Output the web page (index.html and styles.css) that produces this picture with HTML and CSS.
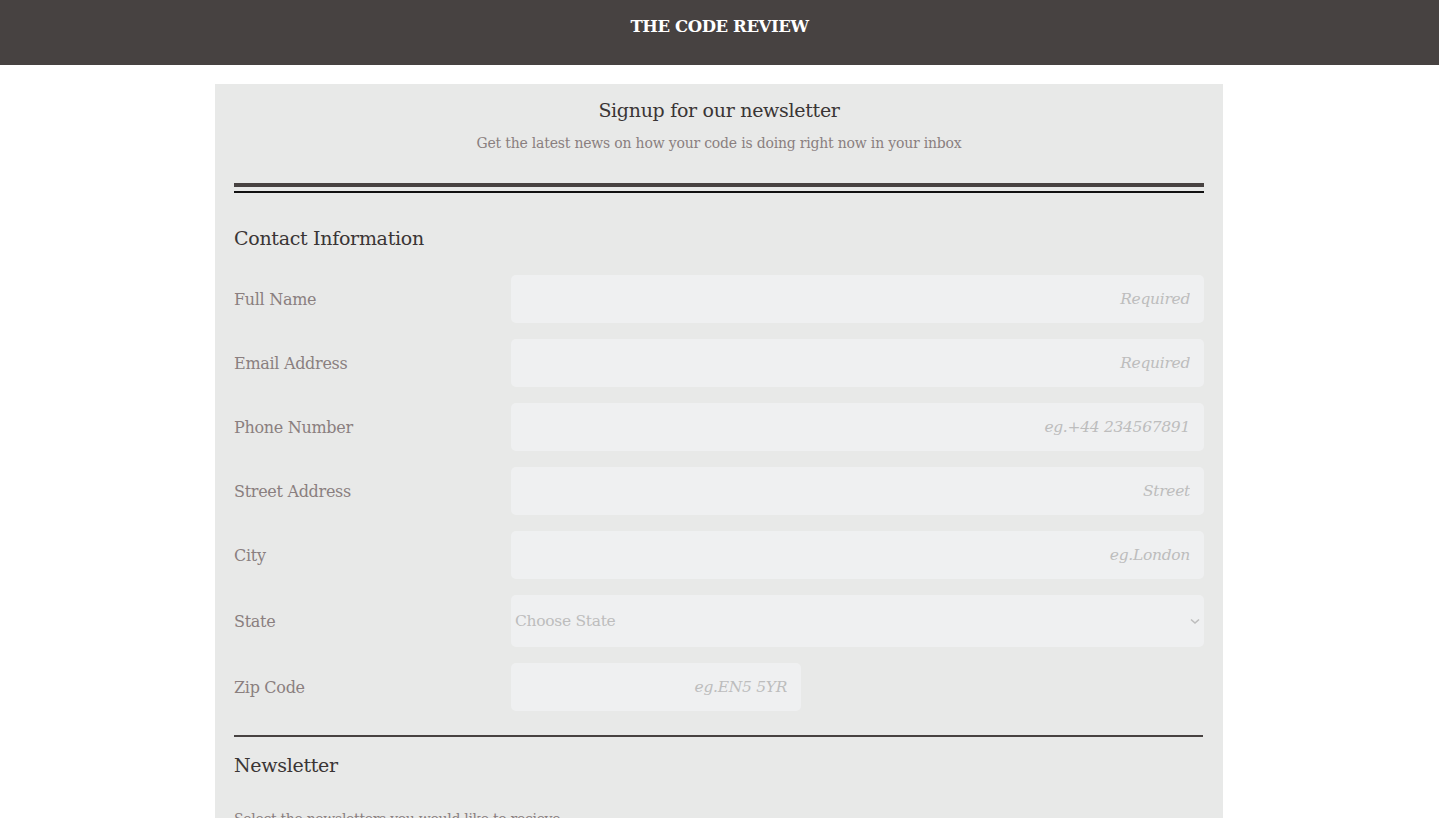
FILE: index.html
```html
<!DOCTYPE html>
<html lang="en">
<head>
<meta charset="utf-8">
<title>The Code Review</title>
<link rel="stylesheet" href="styles.css">
</head>
<body>
<header class="topbar">
  <h1 class="brand">THE CODE REVIEW</h1>
</header>
<main class="card">
  <div class="intro">
    <h2 class="intro-title">Signup for our newsletter</h2>
    <p class="intro-sub">Get the latest news on how your code is doing right now in your inbox</p>
  </div>
  <div class="double-rule"><span class="rule-thick"></span><span class="rule-thin"></span></div>
  <section class="section">
    <h3 class="section-title">Contact Information</h3>
    <div class="rows">
      <div class="row"><label class="label">Full Name</label><input class="field" placeholder="Required"></div>
      <div class="row"><label class="label">Email Address</label><input class="field" placeholder="Required"></div>
      <div class="row"><label class="label">Phone Number</label><input class="field" placeholder="eg.+44 234567891"></div>
      <div class="row"><label class="label">Street Address</label><input class="field" placeholder="Street"></div>
      <div class="row"><label class="label">City</label><input class="field" placeholder="eg.London"></div>
      <div class="row"><label class="label">State</label>
        <div class="select-wrap">
          <select class="select"><option>Choose State</option></select>
          <svg class="chev" width="10" height="7" viewBox="0 0 10 7"><path d="M1 1.5 L5 5 L9 1.5" fill="none" stroke="#bdbdbd" stroke-width="1.6"/></svg>
        </div>
      </div>
      <div class="row"><label class="label">Zip Code</label><input class="field field-short" placeholder="eg.EN5 5YR"></div>
    </div>
  </section>
  <div class="single-rule"></div>
  <section class="section">
    <h3 class="section-title newsletter-title">Newsletter</h3>
    <p class="note">Select the newsletters you would like to recieve</p>
  </section>
</main>
</body>
</html>
```
FILE: styles.css
```css
* { box-sizing: border-box; }
html, body { margin: 0; padding: 0; }
body {
  background: #ffffff;
  font-family: "DejaVu Serif", "Liberation Serif", serif;
  color: #3a3535;
  height: 818px;
  overflow: hidden;
}
.topbar {
  background: #474241;
  height: 65px;
  display: flex;
  align-items: center;
  justify-content: center;
}
.brand {
  margin: 0 0 13px 0;
  color: #ffffff;
  font-size: 16.5px;
  font-weight: bold;
  letter-spacing: -0.4px;
}
.card {
  width: 1008px;
  margin: 19px 0 0 215px;
  background: #e8e9e8;
  padding: 14px 19px 40px;
}
.intro { text-align: center; }
.intro-title {
  margin: 0;
  font-size: 19px;
  font-weight: normal;
  color: #3a3535;
  line-height: 24px;
  letter-spacing: -0.3px;
}
.intro-sub {
  margin: 11px 0 0;
  font-size: 14px;
  color: #8a7f7f;
  line-height: 20px;
  letter-spacing: -0.2px;
}
.double-rule {
  margin-top: 30px;
  display: flex;
  flex-direction: column;
  gap: 4px;
}
.rule-thick { display: block; height: 4px; background: #474241; }
.rule-thin { display: block; height: 2px; background: #111; }
.section-title {
  margin: 33px 0 0;
  font-size: 19px;
  font-weight: normal;
  color: #3a3535;
  line-height: 24px;
  letter-spacing: -0.3px;
}
.rows {
  margin-top: 25px;
  display: flex;
  flex-direction: column;
  gap: 16px;
}
.row {
  display: grid;
  grid-template-columns: 277px 1fr;
  align-items: center;
}
.label {
  font-size: 16px;
  color: #8a7f7f;
  letter-spacing: -0.3px;
}
.field {
  height: 48px;
  border: none;
  border-radius: 5px;
  background: #eff0f1;
  padding: 0 14px;
  text-align: right;
  font-family: inherit;
  font-size: 15.5px;
  outline: none;
}
.field::placeholder {
  color: #bdbdbd;
  font-style: italic;
  letter-spacing: -0.3px;
}
.field-short { width: 290px; }
.select-wrap { position: relative; }
.select {
  width: 100%;
  height: 52px;
  border: none;
  border-radius: 5px;
  background: #eff0f1;
  color: #bdbdbd;
  font-family: inherit;
  font-size: 15.5px;
  padding: 0 4px;
  appearance: none;
  -webkit-appearance: none;
  letter-spacing: -0.3px;
  outline: none;
}
.chev { position: absolute; right: 4px; top: 23px; }
.single-rule {
  margin-top: 24px;
  height: 2px;
  background: #474241;
  margin-right: 1px;
}
.newsletter-title { margin-top: 16px; }
.note {
  margin: 34px 0 0;
  font-size: 14px;
  color: #8a7f7f;
  letter-spacing: -0.3px;
}
```
